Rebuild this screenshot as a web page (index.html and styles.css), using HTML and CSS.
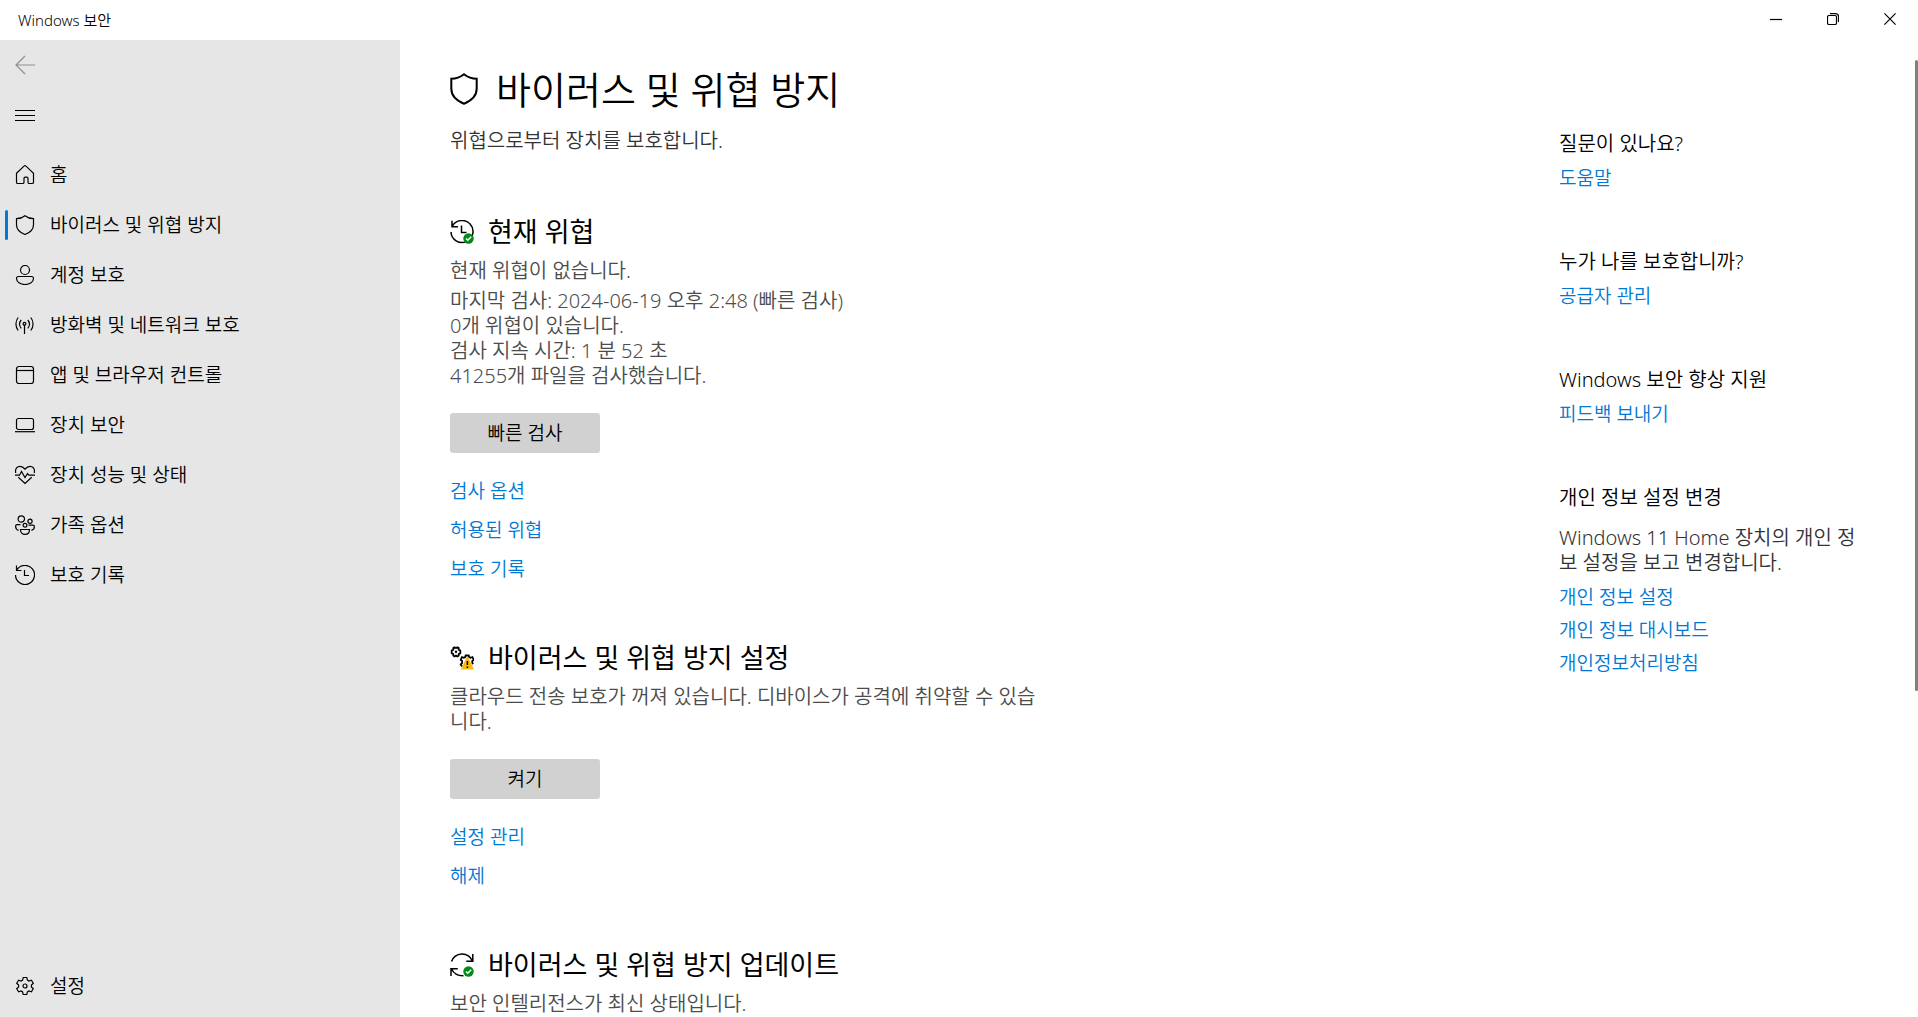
FILE: index.html
```html
<!DOCTYPE html>
<html lang="ko">
<head>
    <meta charset="UTF-8">
    <meta name="viewport" content="width=device-width, initial-scale=1.0">
    <title>Windows 보안</title>
    <link rel="stylesheet" href="styles.css">
</head>
<body>
    <header class="titlebar">
        <span class="titlebar-text">Windows 보안</span>
        <div class="window-controls">
            <button class="window-button" aria-label="최소화">
                <svg width="12" height="12" viewBox="0 0 12 12"><path d="M0 6.5h12"/></svg>
            </button>
            <button class="window-button" aria-label="이전 크기로 복원">
                <svg width="12" height="12" viewBox="0 0 12 12"><rect x=".5" y="2.5" width="9" height="9" rx="1.5"/><path d="M3 .7h5.5a3 3 0 0 1 3 3V9"/></svg>
            </button>
            <button class="window-button" aria-label="닫기">
                <svg width="12" height="12" viewBox="0 0 12 12"><path d="M.4.4l11.2 11.2M11.6.4L.4 11.6"/></svg>
            </button>
        </div>
    </header>

    <div class="layout">
        <aside class="sidebar">
            <button class="icon-button back" aria-label="뒤로" disabled>
                <svg class="icon" viewBox="0 0 20 20"><path d="M10 1L1 10l9 9M1 10h19"/></svg>
            </button>
            <button class="icon-button" aria-label="메뉴">
                <svg class="icon" viewBox="0 0 20 20"><path d="M0 5.5h20M0 10.5h20M0 15.5h20"/></svg>
            </button>

            <nav class="nav">
                <a class="nav-item" href="#">
                    <svg class="icon" viewBox="0 0 20 20"><path d="M1.5 8.2L9 1.1q1-.8 2 0l7.500 7.100v9q0 1.300-1.300 1.300h-2.900q-1.300 0-1.300-1.300v-3.700q0-1.300-1.300-1.300h-1.400q-1.300 0-1.300 1.300v3.700q0 1.300-1.300 1.300H2.800q-1.300 0-1.300-1.300z"/></svg>
                    홈
                </a>
                <a class="nav-item active" href="#" aria-current="page">
                    <svg class="icon" viewBox="0 0 20 20"><path d="M10 .7q3.700 3 8.500 3v6q0 6.500-8.500 9.800-8.500-3.300-8.500-9.800v-6q4.800 0 8.500-3z"/></svg>
                    바이러스 및 위협 방지
                </a>
                <a class="nav-item" href="#">
                    <svg class="icon" viewBox="0 0 20 20"><circle cx="10" cy="5" r="4.500"/><path d="M3.500 11.500h13q2 0 2 2c0 3.500-3.800 6-8.500 6s-8.500-2.500-8.500-6q0-2 2-2z"/></svg>
                    계정 보호
                </a>
                <a class="nav-item" href="#">
                    <svg class="icon" viewBox="0 0 20 20"><path d="M3.200 2.500a10.500 10.500 0 0 0 0 13M15.800 2.500a10.500 10.500 0 0 1 0 13M6.200 5a6.500 6.500 0 0 0 0 8.300M12.800 5a6.500 6.500 0 0 1 0 8.300M9.500 10v9"/><circle cx="9.500" cy="8.800" r="1.400"/></svg>
                    방화벽 및 네트워크 보호
                </a>
                <a class="nav-item" href="#">
                    <svg class="icon" viewBox="0 0 20 20"><rect x="1.500" y="1.500" width="17" height="17" rx="2.500"/><path d="M1.500 5.500h17"/></svg>
                    앱 및 브라우저 컨트롤
                </a>
                <a class="nav-item" href="#">
                    <svg class="icon" viewBox="0 0 20 20"><rect x="1.500" y="3.500" width="17" height="11" rx="2"/><path d="M0 16.700h20"/></svg>
                    장치 보안
                </a>
                <a class="nav-item" href="#">
                    <svg class="icon" viewBox="0 0 20 20"><path d="M.7 8C-.2 3.500 2.500 1.300 5 1.300c2.200 0 3.700 1.200 5 2.900 1.300-1.700 2.800-2.900 5-2.900 2.500 0 5.200 2.200 4.300 6.700M0 10.200h4.500l2-3.700 3.500 6 2.500-4 1.200 1.700H20M3.300 12.200l6.700 6.300 6.700-6.300"/></svg>
                    장치 성능 및 상태
                </a>
                <a class="nav-item" href="#">
                    <svg class="icon" viewBox="0 0 20 20"><circle cx="6.300" cy="4" r="3.200"/><circle cx="15" cy="6.200" r="2.100"/><circle cx="10" cy="10.200" r="1.900"/><path d="M5.500 14.500h9c0 3-1.800 4.900-4.500 4.900s-4.500-1.900-4.500-4.900zM5.500 9.700H2.200Q.6 9.700.6 11.300c0 2 1.300 3.600 3 4M13.500 10.200h4.300q1.600 0 1.600 1.600c0 1.700-1.200 3.200-3 3.500"/></svg>
                    가족 옵션
                </a>
                <a class="nav-item" href="#">
                    <svg class="icon" viewBox="0 0 20 20"><path d="M1.500.5v5h5M1.700 5.300A9.500 9.500 0 1 1 .5 10M9.500 5v5.500h4.500"/></svg>
                    보호 기록
                </a>
            </nav>

            <a class="nav-item settings" href="#">
                <svg class="icon" viewBox="0 0 20 20"><path d="M8.200 1.500h3.600l.6 2.600 1.500.9 2.500-.8 1.900 3.100-1.900 1.800v1.800l1.900 1.800-1.900 3.100-2.500-.8-1.500.9-.6 2.600H8.200l-.6-2.600-1.500-.9-2.500.8-1.900-3.100 1.900-1.800V9.100L1.700 7.300l1.900-3.100 2.500.8 1.500-.9z"/><circle cx="10" cy="10" r="2"/></svg>
                설정
            </a>
        </aside>

        <main class="content">
            <div class="main-column">
                <div class="page-header">
                    <h1>
                        <svg class="page-icon" viewBox="0 0 28 32"><path d="M14 1.300q5.800 4.500 12.700 4.500v9.700c0 7.200-4.600 11.900-12.700 15.200C5.900 27.400 1.300 22.700 1.300 15.500V5.800Q8.200 5.800 14 1.300z"/></svg>
                        바이러스 및 위협 방지
                    </h1>
                    <p class="subtitle">위협으로부터 장치를 보호합니다.</p>
                </div>

                <section class="section">
                    <h2>
                        <svg class="section-icon" viewBox="0 0 24 24"><path d="M2 .8v6h6M2.200 6.500A11 11 0 1 1 1 12M11.500 5.500v7h5"/><circle class="badge-ok" cx="18.500" cy="18.500" r="5.200"/><path class="badge-check" d="M16 18.500l1.800 1.800 3.400-3.500"/></svg>
                        현재 위협
                    </h2>
                    <p class="status">현재 위협이 없습니다.</p>
                    <p class="details">마지막 검사: 2024-06-19 오후 2:48 (빠른 검사)<br>0개 위협이 있습니다.<br>검사 지속 시간: 1 분 52 초<br>41255개 파일을 검사했습니다.</p>
                    <button class="action-button">빠른 검사</button>
                    <div class="links">
                        <a href="#">검사 옵션</a>
                        <a href="#">허용된 위협</a>
                        <a href="#">보호 기록</a>
                    </div>
                </section>

                <section class="section">
                    <h2>
                        <svg class="section-icon" viewBox="0 0 24 24">
                            <g class="gear">
                                <path d="M4.500 1.200l1.500.8 1.500-.8 1.200.8v1.600l1.600.9v2.600l-1.600.9v1.600l-1.200.8L6 9.600l-1.500.8-1.200-.8V8l-1.600-.9V4.500l1.600-.9V2z"/>
                                <path d="M12 20.500l-1.300-2.200 1.400-1.300v-2l-1.400-1.300 1.300-2.500 1.900.6 1.300-.7.500-1.600h3l.5 1.600 1.300.7 1.900-.6 1.300 2.500-1.400 1.300v2l1 1"/>
                            </g>
                            <circle class="gear-dot" cx="6" cy="5.800" r="1.200"/>
                            <path class="badge-warn" d="M16.800 11q.6-.8 1.200 0L24 23.500H10.800z"/>
                            <path class="warn-mark" d="M17.400 15v4M17.400 20.500V22"/>
                        </svg>
                        바이러스 및 위협 방지 설정
                    </h2>
                    <p class="status">클라우드 전송 보호가 꺼져 있습니다. 디바이스가 공격에 취약할 수 있습니다.</p>
                    <button class="action-button">켜기</button>
                    <div class="links">
                        <a href="#">설정 관리</a>
                        <a href="#">해제</a>
                    </div>
                </section>

                <section class="section">
                    <h2>
                        <svg class="section-icon" viewBox="0 0 24 24"><path d="M1.500 8.500C5-1 18-2 22.500 8M22.800 1v7.300h-6.500M1 23v-7.300h6.800M1.500 16c2.500 5 6 7 12 6.800"/><circle class="badge-ok" cx="18.500" cy="18.500" r="5.200"/><path class="badge-check" d="M16 18.500l1.800 1.800 3.400-3.500"/></svg>
                        바이러스 및 위협 방지 업데이트
                    </h2>
                    <p class="status">보안 인텔리전스가 최신 상태입니다.</p>
                </section>
            </div>

            <aside class="help-column">
                <section class="help-block">
                    <h3>질문이 있나요?</h3>
                    <a href="#">도움말</a>
                </section>
                <section class="help-block">
                    <h3>누가 나를 보호합니까?</h3>
                    <a href="#">공급자 관리</a>
                </section>
                <section class="help-block">
                    <h3>Windows 보안 향상 지원</h3>
                    <a href="#">피드백 보내기</a>
                </section>
                <section class="help-block">
                    <h3>개인 정보 설정 변경</h3>
                    <p>Windows 11 Home 장치의 개인 정보 설정을 보고 변경합니다.</p>
                    <a href="#">개인 정보 설정</a>
                    <a href="#">개인 정보 대시보드</a>
                    <a href="#">개인정보처리방침</a>
                </section>
            </aside>
            <div class="scroll-thumb"></div>
        </main>
    </div>
</body>
</html>
```
FILE: styles.css
```css
* {
    margin: 0;
    padding: 0;
    box-sizing: border-box;
}

body {
    display: flex;
    flex-direction: column;
    height: 100vh;
    overflow: hidden;
    background-color: #fff;
    color: #000;
    font-family: "Noto Sans", "Noto Sans CJK KR", sans-serif;
    font-size: 19px;
    font-weight: 350;
    line-height: 25px;
}

a {
    color: #0078d4;
    text-decoration: none;
}

button {
    border: none;
    background: none;
    color: inherit;
    font: inherit;
}

svg {
    flex: none;
    fill: none;
    stroke: #000;
    stroke-width: 1.2;
}

/* Title bar */
.titlebar {
    display: flex;
    flex: none;
    justify-content: space-between;
    height: 40px;
}

.titlebar-text {
    padding-left: 18px;
    font-size: 15px;
    line-height: 40px;
}

.window-controls {
    display: flex;
}

.window-button {
    display: flex;
    align-items: center;
    justify-content: center;
    width: 57px;
    height: 38px;
}

.layout {
    display: flex;
    flex: 1;
    min-height: 0;
}

/* Sidebar */
.sidebar {
    display: flex;
    flex: none;
    flex-direction: column;
    width: 400px;
    padding-bottom: 6px;
    background-color: #e6e6e6;
}

.icon {
    width: 20px;
    height: 20px;
}

.icon-button {
    display: flex;
    align-items: center;
    width: 50px;
    height: 50px;
    padding-left: 15px;
}

.back .icon {
    stroke: #8f8f8f;
}

.nav {
    margin-top: 10px;
}

.nav-item {
    display: flex;
    align-items: center;
    gap: 15px;
    height: 50px;
    padding-left: 15px;
    color: #000;
}

.nav-item.active {
    padding-left: 5px;
}

.nav-item.active::before {
    width: 3px;
    height: 30px;
    margin-right: -8px;
    border-radius: 2px;
    background-color: #0078d4;
    content: "";
}

.settings {
    margin-top: auto;
}

/* Page content */
.content {
    position: relative;
    display: grid;
    flex: 1;
    grid-template-columns: 1fr 310px;
    gap: 40px;
    padding: 24px 49px 0 50px;
    overflow: hidden;
}

.main-column {
    max-width: 600px;
}

.page-header {
    padding-bottom: 3px;
}

h1 {
    display: flex;
    align-items: center;
    gap: 18px;
    font-size: 38px;
    font-weight: 350;
    line-height: 50px;
}

.page-icon {
    width: 28px;
    height: 32px;
    stroke-width: 2;
}

.subtitle {
    margin-top: 14px;
    color: #333;
    font-size: 20px;
}

.section {
    margin-top: 58px;
}

h2 {
    display: flex;
    align-items: center;
    gap: 14px;
    font-size: 27px;
    font-weight: 400;
    line-height: 36px;
}

.section-icon {
    width: 24px;
    height: 24px;
    stroke-width: 1.5;
}

.badge-ok {
    fill: #008a17;
    stroke: none;
}

.badge-check {
    stroke: #fff;
}

.badge-warn {
    fill: #fdb913;
    stroke: none;
}

.gear {
    stroke-width: 1.8;
}

.gear-dot {
    fill: #000;
    stroke: none;
}

.status,
.details {
    color: #4c4c4c;
    font-size: 20px;
    word-break: break-all;
}

.status {
    margin-top: 8px;
}

.details {
    margin-top: 5px;
}

.action-button {
    width: 150px;
    height: 40px;
    margin-top: 25px;
    border-radius: 3px;
    background-color: #d1d1d1;
}

.links {
    display: flex;
    flex-direction: column;
    align-items: flex-start;
    gap: 14px;
    margin-top: 26px;
}

/* Right column */
.help-column {
    padding-top: 67px;
}

.help-block {
    display: flex;
    flex-direction: column;
    align-items: flex-start;
    gap: 8px;
    margin-bottom: 58px;
}

h3 {
    margin-bottom: 2px;
    font-size: 20px;
    font-weight: 350;
}

.help-block p {
    margin-top: 5px;
    margin-bottom: 2px;
    color: #333;
    font-size: 20px;
    word-break: break-all;
}

.scroll-thumb {
    position: absolute;
    top: 20px;
    right: 0;
    width: 3px;
    height: 631px;
    border-radius: 2px;
    background-color: #808080;
}
```
